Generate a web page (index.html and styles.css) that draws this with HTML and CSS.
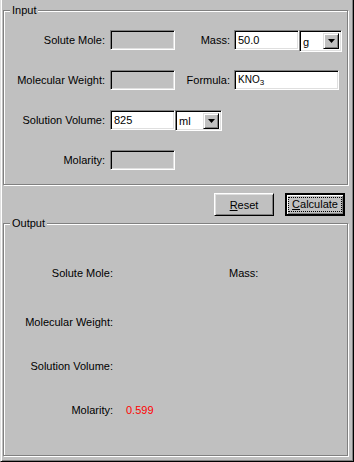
FILE: index.html
```html
<!DOCTYPE html>
<html lang="en">
<head>
    <meta charset="UTF-8">
    <meta name="viewport" content="width=device-width, initial-scale=1.0">
    <title>Molarity</title>
    <link rel="stylesheet" href="styles.css">
</head>
<body>
    <div class="window">
        <div class="group group-input">
            <span class="legend">Input</span>
            <div class="row">
                <label class="lbl">Solute Mole:</label>
                <div class="field disabled"></div>
                <label class="lbl2">Mass:</label>
                <div class="field mass">50.0</div>
                <div class="combo combo-g"><span class="combo-text">g</span><span class="arrow"><svg width="7" height="4" viewBox="0 0 7 4"><path d="M0 0h7L3.5 4z" fill="#000"/></svg></span></div>
            </div>
            <div class="row">
                <label class="lbl">Molecular Weight:</label>
                <div class="field disabled"></div>
                <label class="lbl2">Formula:</label>
                <div class="field formula">KNO<sub>3</sub></div>
            </div>
            <div class="row">
                <label class="lbl">Solution Volume:</label>
                <div class="field">825</div>
                <div class="combo combo-ml"><span class="combo-text">ml</span><span class="arrow"><svg width="7" height="4" viewBox="0 0 7 4"><path d="M0 0h7L3.5 4z" fill="#000"/></svg></span></div>
            </div>
            <div class="row">
                <label class="lbl">Molarity:</label>
                <div class="field disabled"></div>
            </div>
        </div>

        <div class="buttons">
            <button class="btn" type="button"><u>R</u>eset</button>
            <button class="btn btn-default" type="button"><span class="focus"><u>C</u>alculate</span></button>
        </div>

        <div class="group group-output">
            <span class="legend">Output</span>
            <div class="out-row">
                <span class="out-lbl">Solute Mole:</span>
                <span class="out-val"></span>
                <span>Mass:</span>
            </div>
            <div class="out-row out-row-wide">
                <span class="out-lbl">Molecular Weight:</span>
            </div>
            <div class="out-row">
                <span class="out-lbl">Solution Volume:</span>
            </div>
            <div class="out-row">
                <span class="out-lbl">Molarity:</span>
                <span class="out-val result">0.599</span>
            </div>
        </div>
    </div>
</body>
</html>
```

FILE: styles.css
```css
body {
    margin: 0;
    font-family: "Liberation Sans", Arial, sans-serif;
    font-size: 11px;
    color: #000;
    background-color: #c0c0c0;
}

.window {
    height: 462px;
    box-sizing: border-box;
    padding-top: 10px;
    border-left: 1px solid #dfdfdf;
    border-right: 1px solid #000;
    border-bottom: 1px solid #000;
    box-shadow: inset 1px 0 0 #fff, inset -1px -1px 0 #808080;
    background-color: #c0c0c0;
}

/* etched group box */
.group {
    position: relative;
    width: 345px;
    margin-left: 2px;
    box-sizing: border-box;
    border: 1px solid #808080;
    box-shadow: inset 1px 1px 0 #fff, 1px 1px 0 #fff;
}

.group-input {
    height: 175px;
    padding-top: 19px;
}

.group-output {
    height: 233px;
    margin-top: 7px;
    padding-top: 39px;
}

.legend {
    position: absolute;
    top: -8px;
    left: 6px;
    padding: 0 2px;
    line-height: 14px;
    background-color: #c0c0c0;
}

.row {
    display: flex;
    align-items: flex-start;
    height: 20px;
}

.row + .row {
    margin-top: 20px;
}

.lbl {
    width: 101px;
    margin-right: 5px;
    text-align: right;
    line-height: 20px;
}

.lbl2 {
    width: 55px;
    margin-right: 4px;
    text-align: right;
    line-height: 20px;
}

.field {
    width: 65px;
    height: 20px;
    box-sizing: border-box;
    padding: 0 3px;
    line-height: 18px;
    background-color: #fff;
    border: 1px solid;
    border-color: #808080 #fff #fff #808080;
    box-shadow: inset 1px 1px 0 #000, inset -1px -1px 0 #dfdfdf;
}

.field.disabled {
    background-color: #c0c0c0;
}

.field.formula {
    width: 105px;
    font-size: 10px;
}

.field sub {
    font-size: 8px;
    vertical-align: -2px;
}

.combo {
    display: flex;
    align-items: center;
    justify-content: space-between;
    height: 22px;
    box-sizing: border-box;
    padding: 1px 2px 1px 3px;
    background-color: #fff;
    border: 1px solid;
    border-color: #808080 #fff #fff #808080;
    box-shadow: inset 1px 1px 0 #000, inset -1px -1px 0 #dfdfdf;
}

.combo-g {
    width: 43px;
}

.combo-ml {
    width: 47px;
    height: 21px;
}

.combo-text {
    padding-top: 1px;
}

.arrow {
    display: flex;
    align-items: center;
    justify-content: center;
    width: 16px;
    height: 16px;
    box-sizing: border-box;
    background-color: #c0c0c0;
    border: 1px solid;
    border-color: #dfdfdf #000 #000 #dfdfdf;
    box-shadow: inset 1px 1px 0 #fff, inset -1px -1px 0 #808080;
}

.buttons {
    display: flex;
    justify-content: flex-end;
    gap: 11px;
    margin-top: 8px;
    padding-right: 8px;
}

.btn {
    width: 60px;
    height: 23px;
    padding: 0;
    font-family: inherit;
    font-size: 11px;
    color: #000;
    background-color: #c0c0c0;
    border: 1px solid;
    border-color: #fff #000 #000 #fff;
    box-shadow: inset 1px 1px 0 #dfdfdf, inset -1px -1px 0 #808080;
    border-radius: 0;
}

.btn-default {
    border: 2px solid #000;
    box-shadow: inset 1px 1px 0 #fff, inset -1px -1px 0 #808080;
}

.btn-default .focus {
    display: block;
    margin: 0 2px;
    line-height: 13px;
    outline: 1px dotted #000;
}

.out-row {
    display: flex;
    height: 20px;
    line-height: 20px;
}

.out-row + .out-row {
    margin-top: 24px;
}

.out-row.out-row-wide {
    margin-top: 29px;
}

.out-lbl {
    width: 109px;
    text-align: right;
}

.out-val {
    width: 103px;
    margin-left: 13px;
}

.result {
    color: #f00;
}
```
